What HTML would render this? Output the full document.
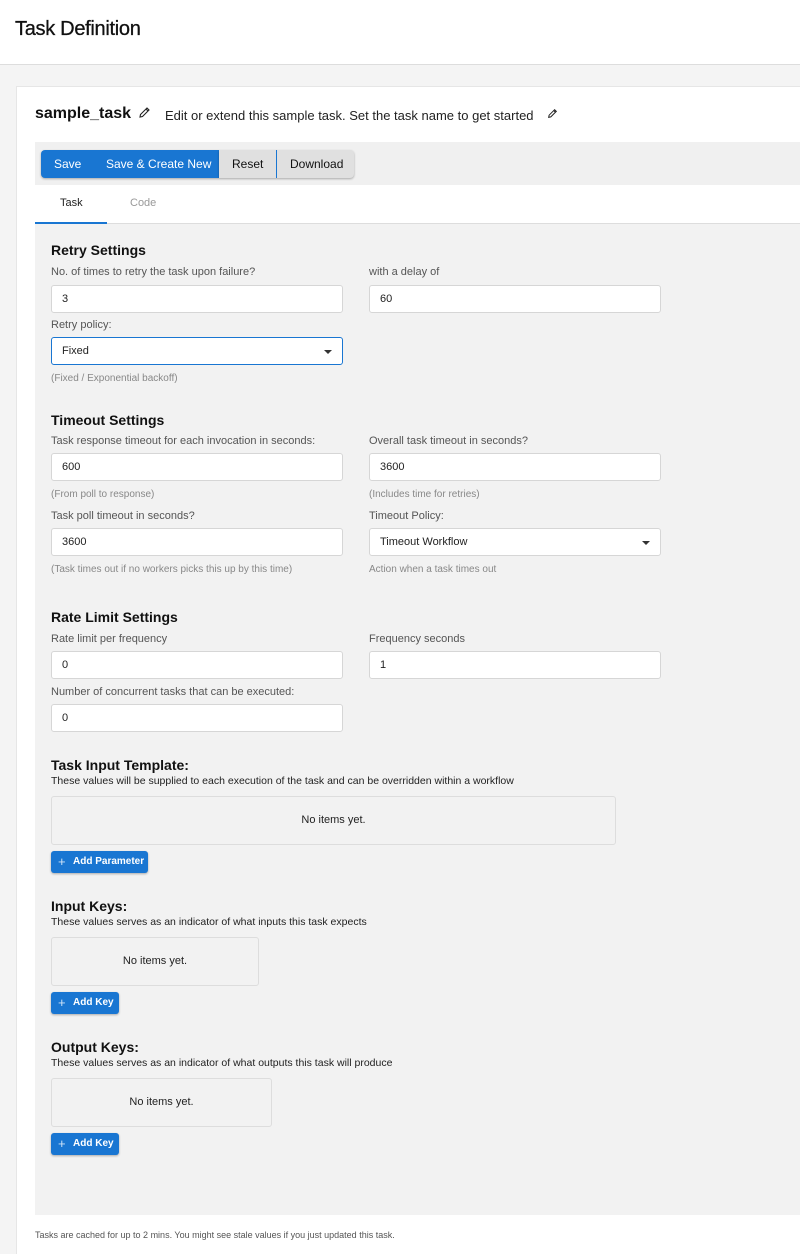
<!DOCTYPE html>
<html><head><style>
*{box-sizing:border-box;margin:0;padding:0}
body{width:800px;height:1254px;background:#f4f4f4;font-family:"Liberation Sans",sans-serif;position:relative;overflow:hidden;color:#111}
.a{position:absolute;white-space:nowrap}
.lbl{font-size:11px;color:#555}
.hint{font-size:10px;color:#888}
.h{font-size:14px;font-weight:bold;color:#111}
.in{position:absolute;background:#fff;border:1px solid #d6d6d6;border-radius:3px;height:28px;font-size:11px;padding:0 10px;line-height:26px;color:#222}
.sel::after{content:"";position:absolute;right:10px;top:12px;border-left:4px solid transparent;border-right:4px solid transparent;border-top:4px solid #333}
.box{position:absolute;background:#f2f2f2;border:1px solid #ddd;border-radius:3px;font-size:11px;text-align:center;color:#222}
.btn{position:absolute;background:#1976d2;color:#fff;font-size:10px;font-weight:bold;border-radius:3px;height:22px;line-height:22px;padding-left:22px;box-shadow:0 1px 2px rgba(0,0,0,.3)}
.btn::before{content:"+";position:absolute;left:7px;top:0;font-size:13px;font-weight:normal;color:#cfe3f7}
.sm{font-size:10.5px;color:#222}
</style></head><body>
<div class="a" style="left:0;top:0;width:800px;height:65px;background:#fff;border-bottom:1px solid #ddd"></div>
<div class="a" style="left:15px;top:18px;font-size:20px;color:#111;letter-spacing:-0.3px;-webkit-text-stroke:0.3px #111">Task Definition</div>
<div class="a" style="left:16px;top:86px;width:784px;height:1168px;background:#fff;border-left:1px solid #e6e6e6;border-top:1px solid #e6e6e6"></div>
<div class="a" style="left:35px;top:105px;font-size:16px;font-weight:bold">sample_task</div>
<svg class="a" style="left:138px;top:106px" width="13" height="13" viewBox="0 0 13 13"><path d="M2 11 L2.5 8.5 L9 2 L11 4 L4.5 10.5 Z M8 3 L10 5" fill="none" stroke="#222" stroke-width="1.1"/></svg>
<div class="a" style="left:165px;top:108px;font-size:13px;color:#222">Edit or extend this sample task. Set the task name to get started</div>
<svg class="a" style="left:547px;top:108px" width="11" height="11" viewBox="0 0 13 13"><path d="M2 11 L2.5 8.5 L9 2 L11 4 L4.5 10.5 Z M8 3 L10 5" fill="none" stroke="#222" stroke-width="1.2"/></svg>
<div class="a" style="left:35px;top:142px;width:765px;height:43px;background:#f0f0f0"></div>
<div class="a" style="left:41px;top:150px;width:178px;height:28px;background:#1976d2;border-radius:4px 0 0 4px;box-shadow:0 1px 2px rgba(0,0,0,.3)"></div>
<div class="a" style="left:54px;top:157px;font-size:12px;color:#fff">Save</div>
<div class="a" style="left:106px;top:157px;font-size:12px;color:#fff">Save &amp; Create New</div>
<div class="a" style="left:219px;top:150px;width:135px;height:28px;background:#e0e0e0;border-radius:0 4px 4px 0;box-shadow:0 1px 2px rgba(0,0,0,.3)"></div>
<div class="a" style="left:276px;top:150px;width:1px;height:28px;background:#1976d2"></div>
<div class="a" style="left:232px;top:157px;font-size:12px">Reset</div>
<div class="a" style="left:290px;top:157px;font-size:12px">Download</div>
<div class="a" style="left:35px;top:223px;width:765px;height:1px;background:#ddd"></div>
<div class="a" style="left:35px;top:222px;width:72px;height:2px;background:#1976d2"></div>
<div class="a" style="left:60px;top:197px;font-size:11px;color:#222">Task</div>
<div class="a" style="left:130px;top:197px;font-size:11px;color:#999">Code</div>
<div class="a" style="left:35px;top:224px;width:765px;height:991px;background:#f2f2f2"></div>

<div class="a h" style="left:51px;top:242px">Retry Settings</div>
<div class="a lbl" style="left:51px;top:266px">No. of times to retry the task upon failure?</div>
<div class="a lbl" style="left:369px;top:266px">with a delay of</div>
<div class="in" style="left:51px;top:285px;width:292px">3</div>
<div class="in" style="left:369px;top:285px;width:292px">60</div>
<div class="a lbl" style="left:51px;top:319px">Retry policy:</div>
<div class="in sel" style="left:51px;top:337px;width:292px;border:1.5px solid #1976d2">Fixed</div>
<div class="a hint" style="left:51px;top:373px">(Fixed / Exponential backoff)</div>

<div class="a h" style="left:51px;top:412px">Timeout Settings</div>
<div class="a lbl" style="left:51px;top:435px">Task response timeout for each invocation in seconds:</div>
<div class="a lbl" style="left:369px;top:435px">Overall task timeout in seconds?</div>
<div class="in" style="left:51px;top:453px;width:292px">600</div>
<div class="in" style="left:369px;top:453px;width:292px">3600</div>
<div class="a hint" style="left:51px;top:489px">(From poll to response)</div>
<div class="a hint" style="left:369px;top:489px">(Includes time for retries)</div>
<div class="a lbl" style="left:51px;top:510px">Task poll timeout in seconds?</div>
<div class="a lbl" style="left:369px;top:510px">Timeout Policy:</div>
<div class="in" style="left:51px;top:528px;width:292px">3600</div>
<div class="in sel" style="left:369px;top:528px;width:292px">Timeout Workflow</div>
<div class="a hint" style="left:51px;top:564px">(Task times out if no workers picks this up by this time)</div>
<div class="a hint" style="left:369px;top:564px">Action when a task times out</div>

<div class="a h" style="left:51px;top:609px">Rate Limit Settings</div>
<div class="a lbl" style="left:51px;top:633px">Rate limit per frequency</div>
<div class="a lbl" style="left:369px;top:633px">Frequency seconds</div>
<div class="in" style="left:51px;top:651px;width:292px">0</div>
<div class="in" style="left:369px;top:651px;width:292px">1</div>
<div class="a lbl" style="left:51px;top:686px">Number of concurrent tasks that can be executed:</div>
<div class="in" style="left:51px;top:704px;width:292px">0</div>

<div class="a h" style="left:51px;top:757px">Task Input Template:</div>
<div class="a sm" style="left:51px;top:775px">These values will be supplied to each execution of the task and can be overridden within a workflow</div>
<div class="box" style="left:51px;top:796px;width:565px;height:49px;line-height:47px">No items yet.</div>
<div class="btn" style="left:51px;top:851px;width:97px">Add Parameter</div>

<div class="a h" style="left:51px;top:898px">Input Keys:</div>
<div class="a sm" style="left:51px;top:916px">These values serves as an indicator of what inputs this task expects</div>
<div class="box" style="left:51px;top:937px;width:208px;height:49px;line-height:47px">No items yet.</div>
<div class="btn" style="left:51px;top:992px;width:68px">Add Key</div>

<div class="a h" style="left:51px;top:1039px">Output Keys:</div>
<div class="a sm" style="left:51px;top:1057px">These values serves as an indicator of what outputs this task will produce</div>
<div class="box" style="left:51px;top:1078px;width:221px;height:49px;line-height:47px">No items yet.</div>
<div class="btn" style="left:51px;top:1133px;width:68px">Add Key</div>

<div class="a" style="left:35px;top:1230px;font-size:9px;color:#555">Tasks are cached for up to 2 mins. You might see stale values if you just updated this task.</div>
</body></html>
